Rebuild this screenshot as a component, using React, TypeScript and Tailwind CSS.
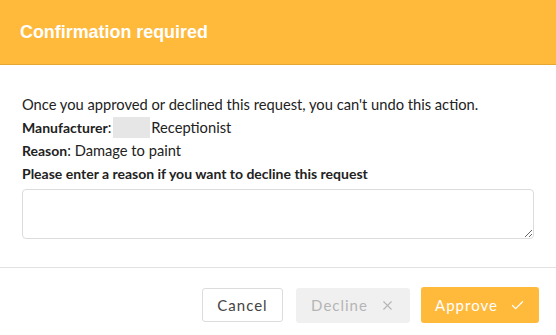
import { X, Check } from "lucide-react";

export default function App() {
  return (
    <div className="w-[556px] h-[335px] bg-white flex flex-col font-['Lato',sans-serif] text-[14.7px] text-[#222]">
      <div className="h-[65px] bg-[#FFB93B] border-b border-[#E6A632] px-[20px] flex items-center">
        <h1 className="text-white text-[17.9px] font-bold font-['Liberation_Sans',Arial,sans-serif]">
          Confirmation required
        </h1>
      </div>

      <div className="px-[22px] pt-[27px] pb-[28px] border-b border-[#e2e2e2]">
        <p className="leading-[24px]">Once you approved or declined this request, you can't undo this action.</p>
        <p className="leading-[23px] flex items-center">
          <span className="font-bold text-[14px]">Manufacturer</span>:
          <span className="inline-block w-[37px] h-[21px] bg-[#e6e6e6] ml-[2px] mr-[1px]" />
          Receptionist
        </p>
        <p className="leading-[23px]">
          <span className="font-bold text-[14px]">Reason</span>: Damage to paint
        </p>
        <p className="leading-[24px] font-bold text-[14px]">Please enter a reason if you want to decline this request</p>
        <textarea className="mt-[3px] w-full h-[50px] border border-[#dcdcdc] rounded-[4px] block resize-y outline-none" />
      </div>

      <div className="flex justify-end items-center px-[17px] pt-[19px]">
        <button
          type="button"
          className="h-[34px] w-[81px] rounded-[3px] border border-[#dcdcdc] bg-white text-[#444] text-[15px] tracking-[1px]"
        >
          Cancel
        </button>
        <button
          type="button"
          className="ml-[13px] h-[35px] w-[114px] rounded-[3px] bg-[#f0f0f0] text-[#b5b5b5] text-[15px] tracking-[1px] flex items-center justify-center gap-[12px]"
        >
          Decline
          <X className="w-[15px] h-[15px]" strokeWidth={1.75} />
        </button>
        <button
          type="button"
          className="ml-[11px] h-[36px] w-[118px] rounded-[3px] bg-[#FFB93B] text-white text-[15px] tracking-[1px] flex items-center justify-center gap-[12px]"
        >
          Approve
          <Check className="w-[15px] h-[15px]" strokeWidth={2} />
        </button>
      </div>
    </div>
  );
}
